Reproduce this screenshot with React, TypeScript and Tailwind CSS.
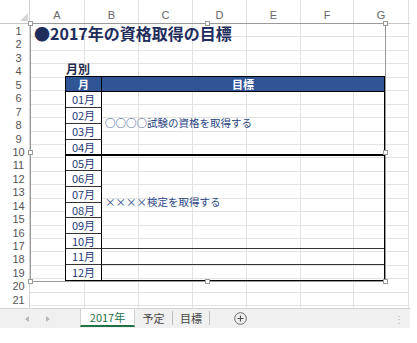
import React from "react";

const cols = [
  { label: "A", w: "w-[55px]" },
  { label: "B", w: "w-[54px]" },
  { label: "C", w: "w-[54px]" },
  { label: "D", w: "w-[54px]" },
  { label: "E", w: "w-[54px]" },
  { label: "F", w: "w-[53px]" },
  { label: "G", w: "w-[55px]" },
];

const rows = Array.from({ length: 22 }, (_, i) => i + 1);

const months = ["01月", "02月", "03月", "04月", "05月", "06月", "07月", "08月", "09月", "10月", "11月", "12月"];

const jp = { fontFamily: '"Noto Sans CJK JP", "Noto Sans", sans-serif' };
const latin = { fontFamily: '"Liberation Sans", Arial, sans-serif' };

// small resize handle on the picture frame
const Handle = ({ className }: { className: string }) => (
  <div className={`absolute w-[5px] h-[5px] bg-white border border-[#9a9a9a] ${className}`} />
);

const MonthTable = () => {
  return (
    <div
      className="grid grid-cols-[36px_1fr] grid-rows-[15px_16px_16px_16px_16px_15px_16px_16px_15px_16px_15px_16px_15px] w-[320px] border border-black"
      style={jp}
    >
      {/* header */}
      <div className="bg-[#2f5597] border-r border-b border-black flex items-center justify-center text-white font-bold text-[11px] leading-none">
        月
      </div>
      <div className="bg-[#2f5597] border-b border-black flex items-center justify-center text-white font-bold text-[11px] leading-none">
        目標
      </div>

      {months.map((m, i) => {
        const border =
          i === 11 ? "" : i === 3 ? "border-b-2 border-b-black" : "border-b border-b-[#333]";
        return (
          <div
            key={m}
            className={`bg-white border-r border-black flex items-center justify-center text-[11px] leading-none text-[#1f3a78] ${border}`}
            style={{ gridColumn: 1, gridRow: i + 2 }}
          >
            {m}
          </div>
        );
      })}

      {/* goal column, merged cells */}
      <div
        className="border-b-2 border-black flex items-center pl-[3px] text-[10.5px] leading-none text-[#2a4584]"
        style={{ gridColumn: 2, gridRow: "2 / span 4" }}
      >
        ○○○○試験の資格を取得する
      </div>
      <div
        className="border-b border-[#333] flex items-center pl-[3px] text-[10.5px] leading-none text-[#2a4584]"
        style={{ gridColumn: 2, gridRow: "6 / span 6" }}
      >
        ××××検定を取得する
      </div>
      <div className="border-b border-[#333]" style={{ gridColumn: 2, gridRow: 12 }} />
      <div style={{ gridColumn: 2, gridRow: 13 }} />
    </div>
  );
};

const App = () => {
  return (
    <div className="w-[417px] h-[343px] bg-white overflow-hidden relative">
      <div className="w-[410px] relative">
        {/* column headers */}
        <div className="flex h-[24px] border-b border-[#c6c6c6] bg-white" style={latin}>
          <div className="w-[30px] border-r border-[#d4d4d4] relative shrink-0">
            <svg className="absolute left-[20px] top-[13px]" width="8" height="8" viewBox="0 0 8 8">
              <polygon points="8,0 8,8 0,8" fill="#d6d6d6" />
            </svg>
          </div>
          {cols.map((c) => (
            <div
              key={c.label}
              className={`${c.w} shrink-0 border-r border-[#e1e1e1] pt-[8px] text-center text-[11px] leading-[14px] text-[#666]`}
            >
              {c.label}
            </div>
          ))}
        </div>

        {/* grid */}
        <div className="h-[284px] overflow-hidden">
          {rows.map((r) => (
            <div key={r} className="flex h-[13.45px]">
              <div
                className="w-[30px] shrink-0 border-r border-[#d4d4d4] pl-[8px] text-center text-[11px] leading-[13px] pt-[1px] text-[#555]"
                style={latin}
              >
                {r <= 21 ? r : ""}
              </div>
              {cols.map((c) => (
                <div key={c.label} className={`${c.w} shrink-0 border-r border-b border-[#e3e3e3]`} />
              ))}
            </div>
          ))}
        </div>

        {/* sheet tabs */}
        <div className="flex items-start h-[20px] bg-[#f0f0f0] border-t border-[#d4d4d4]" style={jp}>
          <div className="w-[80px] shrink-0 h-[19px] flex items-center">
            <svg className="ml-[25px]" width="4" height="6" viewBox="0 0 4 6">
              <polygon points="4,0 4,6 0,3" fill="#b8b8b8" />
            </svg>
            <svg className="ml-[17px]" width="4" height="6" viewBox="0 0 4 6">
              <polygon points="0,0 0,6 4,3" fill="#b8b8b8" />
            </svg>
          </div>
          <div className="w-[55px] shrink-0 h-[18px] bg-white border-x border-[#d4d4d4] border-b-2 border-b-[#217346] flex items-center justify-center text-[11px] text-[#217346] leading-none">
            2017年
          </div>
          <div className="w-[37px] shrink-0 h-[19px] flex items-center justify-center text-[11px] text-[#444] leading-none">
            予定
          </div>
          <div className="w-px h-[14px] mt-[2px] bg-[#bdbdbd]" />
          <div className="w-[36px] shrink-0 h-[19px] flex items-center justify-center text-[11px] text-[#444] leading-none">
            目標
          </div>
          <div className="w-px h-[14px] mt-[2px] bg-[#bdbdbd]" />
          <div className="ml-[24px] h-[19px] flex items-center">
            <svg width="13" height="13" viewBox="0 0 13 13">
              <circle cx="6.5" cy="6.5" r="5.8" fill="none" stroke="#6a6a6a" strokeWidth="1" />
              <path d="M6.5 3.5v6M3.5 6.5h6" stroke="#555" strokeWidth="1.2" />
            </svg>
          </div>
          <div className="ml-auto mr-[6px] h-[19px] flex items-center text-[10px] text-[#b0b0b0] leading-none">
            ⋮
          </div>
        </div>

        {/* linked picture over the sheet */}
        <div className="absolute left-[30px] top-[23px] w-[356px] h-[259px] border border-[#9a9a9a]">
          <div className="flex flex-col">
            <div
              className="h-[19px] pl-[3px] text-[16px] font-bold leading-[19px] text-[#1f2d5c] whitespace-nowrap"
              style={jp}
            >
              ●2017年の資格取得の目標
            </div>
            <div
              className="mt-[19px] h-[14px] pl-[35px] text-[12px] font-bold leading-[14px] text-[#1f2a4c]"
              style={jp}
            >
              月別
            </div>
            <div className="pl-[34px]">
              <MonthTable />
            </div>
          </div>
          <Handle className="-left-[3px] -top-[3px]" />
          <Handle className="left-[174px] -top-[3px]" />
          <Handle className="-right-[3px] -top-[3px]" />
          <Handle className="-left-[3px] top-[126px]" />
          <Handle className="-right-[3px] top-[126px]" />
          <Handle className="-left-[3px] -bottom-[3px]" />
          <Handle className="left-[174px] -bottom-[3px]" />
          <Handle className="-right-[3px] -bottom-[3px]" />
        </div>
      </div>
    </div>
  );
};

export default App;
